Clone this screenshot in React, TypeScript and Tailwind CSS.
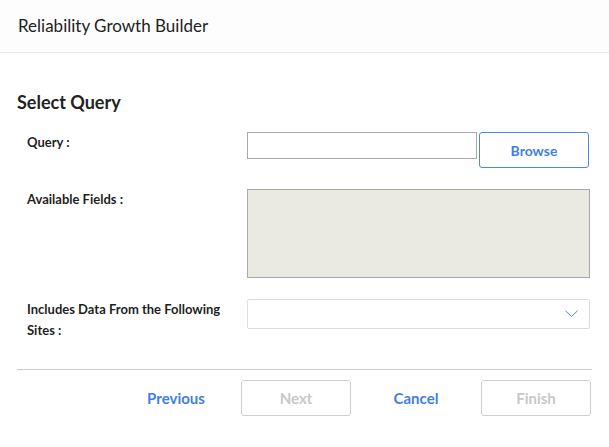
import React from "react";

const labelCls = "w-[230px] shrink-0 pl-[10px] text-[13px] font-bold leading-[21px] text-[#1f1f1f]";

const FooterButton: React.FC<{ label: string; boxed?: boolean; disabled?: boolean }> = ({ label, boxed, disabled }) => (
    <button
        type="button"
        className={
            boxed
                ? "w-[110px] h-[36px] rounded-[3px] border border-[#cfcfcf] bg-white text-[15px] font-bold text-[#c8c8c8]"
                : "w-[110px] h-[36px] text-[15px] font-bold text-[#3f7fe3]"
        }
        disabled={disabled}
    >
        {label}
    </button>
);

export default function App() {
    return (
        <div className="w-[609px] h-[447px] bg-white text-[#222]" style={{ fontFamily: "Lato, 'Noto Sans', sans-serif" }}>
            {/* Header */}
            <div className="h-[53px] flex items-center px-[18px] border-b border-[#e9ecee] bg-[#fdfdfd]">
                <span className="text-[17px] text-[#222]">Reliability Growth Builder</span>
            </div>

            <div className="px-[17px]">
                <h2 className="mt-[38px] text-[18px] font-bold leading-[22px] text-[#222]">Select Query</h2>

                <div className="mt-[19px] flex flex-col gap-[21px] pr-[2px]">
                    {/* Query row */}
                    <div className="flex">
                        <div className={labelCls}>Query :</div>
                        <div className="flex gap-[2px]">
                            <input
                                type="text"
                                className="w-[230px] h-[27px] border border-[#a9a9a9] bg-white outline-none"
                            />
                            <button
                                type="button"
                                className="w-[110px] h-[36px] rounded-[3px] border border-[#4a89e6] bg-white text-[14px] font-bold text-[#3f7fe3]"
                            >
                                Browse
                            </button>
                        </div>
                    </div>

                    {/* Available fields */}
                    <div className="flex">
                        <div className={labelCls}>Available Fields :</div>
                        <div className="flex-1 h-[89px] border border-[#a9a9a9] bg-[#eae9e2]" />
                    </div>

                    {/* Sites */}
                    <div className="flex">
                        <div className={labelCls + " pr-[16px]"}>Includes Data From the Following Sites :</div>
                        <div className="flex-1 h-[30px] rounded-[2px] border border-[#dddddd] bg-white flex items-center justify-end pr-[11px]">
                            <svg width="13" height="8" viewBox="0 0 13 8" fill="none">
                                <path d="M0.5 0.8 L6.5 6.5 L12.5 0.8" stroke="#5b7fe6" strokeWidth="1" />
                            </svg>
                        </div>
                    </div>
                </div>

                {/* Footer */}
                <div className="mt-[28px] border-t border-[#cccccc] pt-[10px] flex justify-end gap-[10px] pr-[1px]">
                    <FooterButton label="Previous" />
                    <FooterButton label="Next" boxed disabled />
                    <FooterButton label="Cancel" />
                    <FooterButton label="Finish" boxed disabled />
                </div>
            </div>
        </div>
    );
}
